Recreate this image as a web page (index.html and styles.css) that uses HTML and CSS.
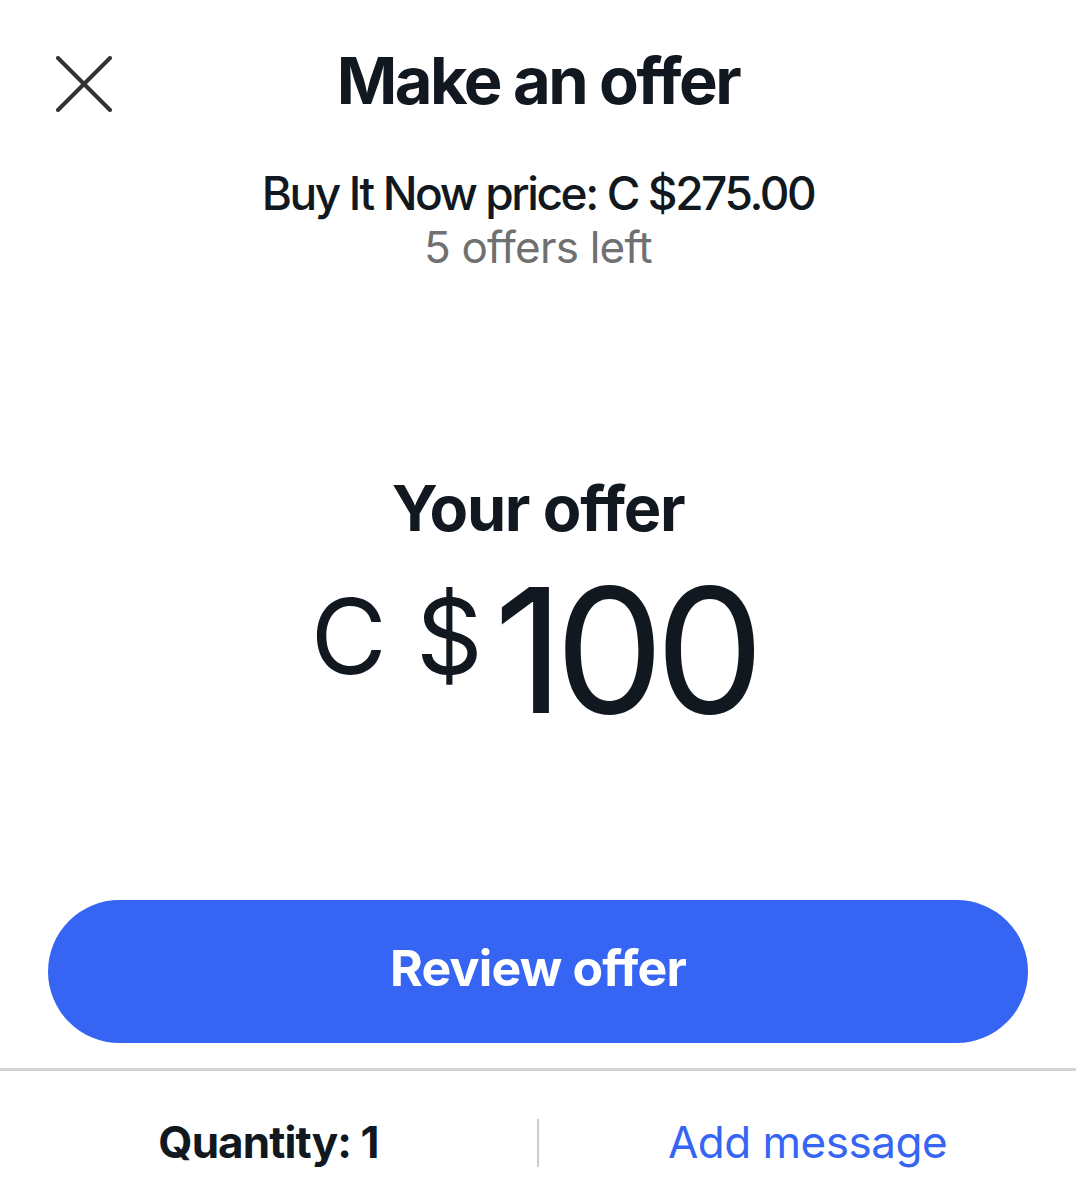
FILE: index.html
```html
<!DOCTYPE html>
<html lang="en">
<head>
  <meta charset="UTF-8" />
  <title>Make an offer</title>
  <meta name="viewport" content="width=device-width, initial-scale=1.0">
  <link rel="stylesheet" href="styles.css">
</head>
<body>
  <div class="sheet">
    <div class="header">
      <button class="close" aria-label="Close">
        <svg width="56" height="56" viewBox="0 0 56 56" fill="none" stroke="currentColor" stroke-width="4" stroke-linecap="round">
          <path d="M2 2L54 54M54 2L2 54" />
        </svg>
      </button>
      <h1 class="title">Make an offer</h1>
    </div>

    <div class="price-info">
      <div class="bin-price">Buy It Now price: C $275.00</div>
      <div class="offers-left">5 offers left</div>
    </div>

    <div class="offer">
      <div class="offer-label">Your offer</div>
      <div class="offer-amount">
        <span class="currency">C $</span>
        <span class="value">100</span>
      </div>
    </div>

    <div class="actions">
      <button class="review-btn">Review offer</button>
    </div>

    <div class="footer">
      <div class="footer-item quantity">Quantity: 1</div>
      <div class="footer-sep"></div>
      <div class="footer-item"><a href="#" class="add-msg">Add message</a></div>
    </div>
  </div>
</body>
</html>
```

FILE: styles.css
```css
body {
  margin: 0;
  padding: 0;
  background-color: #ffffff;
  font-family: "Inter", "Noto Sans", sans-serif;
  color: #111820;
}

.sheet {
  width: 1076px;
  height: 1200px;
  display: flex;
  flex-direction: column;
  overflow: hidden;
}

.header {
  display: flex;
  align-items: center;
  justify-content: center;
  padding-top: 42px;
  position: relative;
}

.close {
  position: absolute;
  left: 56px;
  top: 56px;
  background: none;
  border: none;
  padding: 0;
  color: #333333;
  cursor: pointer;
  display: flex;
}

.title {
  margin: 0;
  font-size: 65px;
  line-height: 78px;
  font-weight: 700;
  letter-spacing: -2.5px;
}

.price-info {
  margin-top: 46px;
  text-align: center;
}

.bin-price {
  font-size: 46px;
  line-height: 55px;
  font-weight: 500;
  letter-spacing: -2.4px;
}

.offers-left {
  font-size: 44px;
  line-height: 53px;
  color: #707070;
  letter-spacing: -0.8px;
}

.offer {
  margin-top: 196px;
  display: flex;
  flex-direction: column;
  align-items: center;
}

.offer-label {
  font-size: 63px;
  line-height: 76px;
  font-weight: 700;
  letter-spacing: -1.3px;
}

.offer-amount {
  display: flex;
  align-items: flex-start;
  margin-top: 18px;
  margin-right: 10px;
  gap: 11px;
}

.currency {
  font-size: 104px;
  line-height: 104px;
  margin-top: 20px;
}

.value {
  font-size: 173px;
  line-height: 173px;
  letter-spacing: -9px;
}

.actions {
  margin-top: 163px;
  padding: 0 48px;
}

.review-btn {
  width: 100%;
  height: 143px;
  padding: 0 0 8px;
  border: none;
  border-radius: 72px;
  background-color: #3665f3;
  color: #ffffff;
  font-family: inherit;
  font-size: 50px;
  font-weight: 700;
  letter-spacing: -0.8px;
  cursor: pointer;
}

.footer {
  margin-top: 25px;
  border-top: 3px solid #d3d3d3;
  display: flex;
  align-items: center;
  padding-top: 45px;
}

.footer-item {
  flex: 1;
  text-align: center;
  font-size: 44px;
  line-height: 53px;
  letter-spacing: -0.5px;
}

.quantity {
  font-weight: 700;
  letter-spacing: -0.9px;
}

.footer-sep {
  width: 2px;
  height: 48px;
  background-color: #cccccc;
}

.add-msg {
  color: #3665f3;
  text-decoration: none;
}
```
